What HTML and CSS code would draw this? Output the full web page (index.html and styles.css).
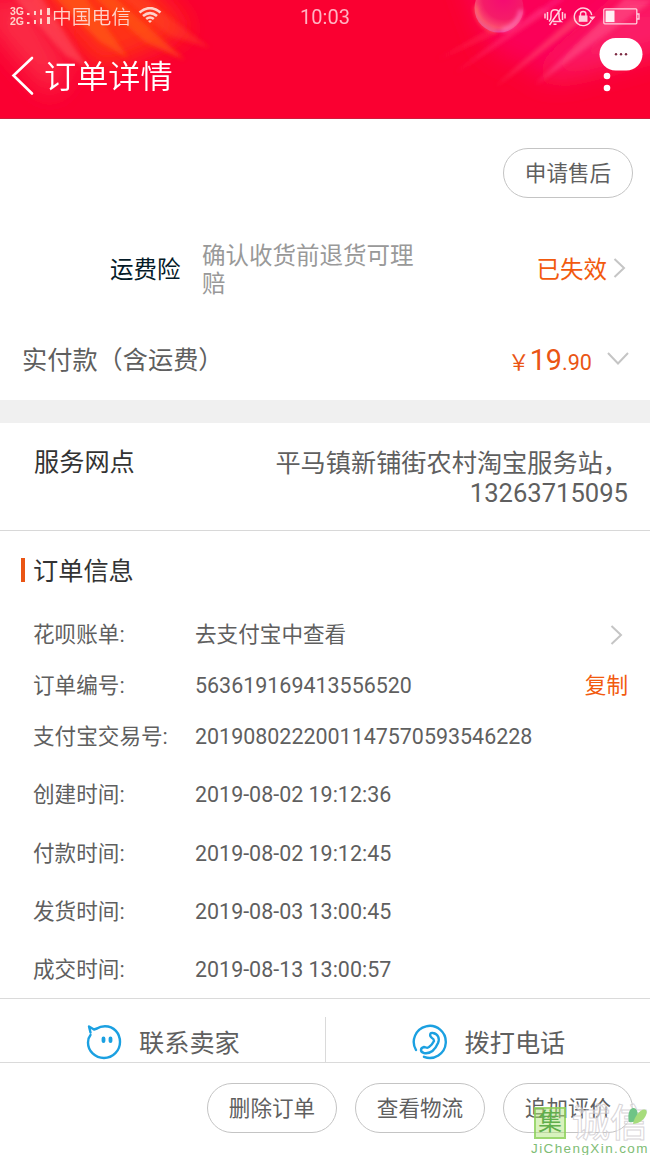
FILE: index.html
```html
<!DOCTYPE html>
<html lang="zh-CN">
<head>
<meta charset="utf-8">
<title>订单详情</title>
<link rel="stylesheet" href="styles.css">
</head>
<body>
<div class="screen">
  <header class="header">
    <svg class="header-art" viewBox="0 0 650 119" preserveAspectRatio="none" aria-hidden="true">
      <defs>
        <filter id="soft" x="-30%" y="-30%" width="160%" height="160%"><feGaussianBlur stdDeviation="13"/></filter>
        <filter id="streak" x="-30%" y="-30%" width="160%" height="160%"><feGaussianBlur stdDeviation="2.200"/></filter>
        <radialGradient id="ball" cx="0.6" cy="0.3" r="0.72">
          <stop offset="0" stop-color="#f50a72"/><stop offset="0.6" stop-color="#f51c68"/><stop offset="0.85" stop-color="#fb4a70"/><stop offset="1" stop-color="#e83ca4"/>
        </radialGradient>
      </defs>
      <rect width="650" height="119" fill="#fa0031"/>
      <g filter="url(#soft)">
        <path d="M20-30H135L190 30 150 50 100 70Z" fill="#ff3212"/>
        <path d="M-10 0 25 0 70 70 50 95-10 25Z" fill="#fb2d46"/>
        <path d="M460-30H690V45L560 80 490 50Z" fill="#fb0058"/>
        <path d="M535 80 620 5H680V45L590 70Z" fill="#fb1c68"/>
      </g>
      <g filter="url(#streak)">
        <path d="M12-5 40-5 88 68 66 56Z" fill="#ff5e62" opacity=".5"/>
        <path d="M52-5 84-5 128 58 100 42Z" fill="#ff6a17" opacity=".5"/>
        <path d="M92-5 112-5 185 60 145 42Z" fill="#ff5a18" opacity=".6"/>
        <path d="M120-5 140-5 210 48 170 36Z" fill="#ff4a2b" opacity=".4"/>
        <path d="M437 60 495 26 504 30Z" fill="#ff2858" opacity=".55"/>
        <path d="M455 73 540 8 552 10Z" fill="#ff3070" opacity=".6"/>
        <path d="M495 87 574 16 584 20Z" fill="#ff4c70" opacity=".6"/>
        <path d="M535 85 625-2 654 0Z" fill="#ff5c90" opacity=".5"/>
        <path d="M500 40 556-2 566-2Z" fill="#ff2c90" opacity=".5"/>
      </g>
      <circle cx="499" cy="8" r="24.500" fill="url(#ball)"/>
      <path d="M476 6a23 23 0 0 0 20 25" fill="none" stroke="#ff8a62" stroke-width="3" opacity=".65" filter="url(#streak)"/>
      <path d="M502 30a23 23 0 0 0 19-20" fill="none" stroke="#ff79c7" stroke-width="4" opacity=".8" filter="url(#streak)"/>
      <rect y="118" width="650" height="1" fill="#d01c3c"/>
    </svg>
    <div class="status">
      <div class="status-left">
        <span class="network"><span>3G</span><span>2G</span></span>
        <svg class="signal" width="24" height="18" viewBox="0 0 24 18" fill="#ffd2ca">
          <path d="M0 5h2.500v2H0zM0 14h2.500v2H0zM7 3h2v4H7zM7 12h2v4H7zM13 1.500h2V7h-2zM13 10.500h2V16h-2zM20 0h3v7h-3zM20 9h3v7h-3z"/>
        </svg>
        <span class="carrier">中国电信</span>
        <svg class="wifi" width="24" height="17" viewBox="0 0 24 17" fill="none" stroke="#ffd2ca" stroke-width="2.600">
          <path d="M1.500 5.500Q12-3.200 22.500 5.500M5 9Q12 3.200 19 9M8.200 12Q12 9 15.800 12"/><path d="M10 14Q12 12.600 14 14L12 16Z" fill="#ffd2ca" stroke="none"/>
        </svg>
      </div>
      <span class="clock">10:03</span>
      <div class="status-right">
        <svg width="22" height="18" viewBox="0 0 22 18" fill="none" stroke="#ffd0de" stroke-width="1.500">
          <path d="M1 5.500v5M3.500 4v8M18.500 4v8M21 5.500v5M5 13.500Q7 12 7 9V6Q7 1.800 11 1.800T15 6v3q0 3 2 4.500H9M9.500 16.200h3M17 .5 5.500 17"/>
        </svg>
        <svg width="23" height="20" viewBox="0 0 23 20" fill="none" stroke="#ffd0de" stroke-width="1.400">
          <path d="M18.300 13A8.800 8.800 0 1 1 18.700 8"/><path d="M16 9.500h6.500l-3.200 3.800Z" fill="#ffd0de" stroke="none"/>
          <rect x="5.800" y="8.500" width="8.700" height="6.300" fill="#ffd0de" stroke="none"/><path d="M7.500 9V6.800q0-2.300 2.700-2.300t2.700 2.300V9"/>
        </svg>
        <svg width="37" height="17" viewBox="0 0 37 17" fill="none" stroke="#ffd0de" stroke-width="1.300">
          <rect x=".8" y=".8" width="33" height="15" rx="1"/><rect x="2.500" y="2.500" width="9" height="11.600" fill="#fff0f4" stroke="none"/><path d="M34 6h2v5h-2"/>
        </svg>
      </div>
    </div>
    <div class="titlebar">
      <svg width="23" height="40" viewBox="0 0 23 40" fill="none" stroke="#fff" stroke-width="2.600" stroke-linecap="round"><path d="M21 2 2.500 19.500 21 37.500"/></svg>
      <h1>订单详情</h1>
    </div>
    <svg class="more" width="8" height="26" viewBox="0 0 8 26" fill="#fff"><circle cx="4" cy="9" r="3.300"/><circle cx="4" cy="21" r="3.300"/></svg>
    <svg class="bubble" width="44" height="34" viewBox="0 0 44 34"><rect x=".5" y="0" width="43" height="32.500" rx="16.200" fill="#fff"/><g fill="#7c2942"><circle cx="17" cy="16.300" r="1.200"/><circle cx="22" cy="16.300" r="1.200"/><circle cx="27" cy="16.300" r="1.200"/></g></svg>
  </header>

  <main>
    <div class="aftersale"><button class="pill">申请售后</button></div>
    <div class="insurance">
      <span class="insurance-name">运费险</span>
      <span class="insurance-desc">确认收货前退货可理赔</span>
      <span class="insurance-state">已失效</span>
      <svg class="chevron" width="13" height="20" viewBox="0 0 13 20"><path d="M1.500 1 11 10 1.500 19"/></svg>
    </div>
    <div class="payment">
      <span class="payment-name">实付款（含运费）</span>
      <span class="price"><span class="yen">￥</span><span class="yuan">19</span><span class="cents">.90</span></span>
      <svg class="chevron" width="22" height="14" viewBox="0 0 22 14"><path d="M1 1 11 11.500 21 1"/></svg>
    </div>
    <div class="divider"></div>
    <div class="station">
      <span class="station-name">服务网点</span>
      <div class="station-value"><span class="station-address">平马镇新铺街农村淘宝服务站，</span><span class="station-phone">13263715095</span></div>
    </div>
    <section class="info">
      <h2>订单信息</h2>
      <dl>
        <div class="row"><dt>花呗账单:</dt><dd class="zh">去支付宝中查看</dd><svg class="chevron" width="13" height="20" viewBox="0 0 13 20"><path d="M1.500 1 11 10 1.500 19"/></svg></div>
        <div class="row"><dt>订单编号:</dt><dd>563619169413556520</dd><span class="copy">复制</span></div>
        <div class="row"><dt>支付宝交易号:</dt><dd>2019080222001147570593546228</dd></div>
        <div class="row tall"><dt>创建时间:</dt><dd>2019-08-02 19:12:36</dd></div>
        <div class="row tall"><dt>付款时间:</dt><dd>2019-08-02 19:12:45</dd></div>
        <div class="row tall"><dt>发货时间:</dt><dd>2019-08-03 13:00:45</dd></div>
        <div class="row tall"><dt>成交时间:</dt><dd>2019-08-13 13:00:57</dd></div>
      </dl>
    </section>
    <div class="contact">
      <div class="contact-item">
        <svg width="36" height="36" viewBox="0 0 36 36" fill="none" stroke="#1ba0e1" stroke-width="2.400" stroke-linecap="round" stroke-linejoin="round">
          <path d="M4.500 8.500 3 2.500 8 5.500 11 4.500Q14 2.200 19 2.200C28 2.200 34 9.500 34 18S27 34 18 34 2 27 2 18.500Q2 14 4.500 11"/><path d="M17.500 14.500v2.500M24.500 14.500v2.500" stroke-width="3.800"/>
        </svg>
        <span>联系卖家</span>
      </div>
      <div class="contact-item">
        <svg width="36" height="36" viewBox="0 0 36 36" fill="none" stroke="#1ba0e1" stroke-width="2.400" stroke-linecap="round" stroke-linejoin="round">
          <path d="M4 26A16 16 0 1 1 12 32.800"/>
          <path d="M20 14C17 12 18 8 21 9C26 10 28 14 26 19C23 26 18 30 12 29C8 28 8 24 12 23C14 23 15 25 17 23C20 21 21 19 22 17Q22 15 20 14Z"/>
        </svg>
        <span>拨打电话</span>
      </div>
    </div>
  </main>

  <footer class="actions">
    <button class="pill">删除订单</button>
    <button class="pill">查看物流</button>
    <button class="pill">追加评价</button>
    <div class="watermark">
      <div class="mark-line">
        <span class="mark-box">集</span><span class="mark-text">诚</span><span class="mark-text">信</span>
        <svg class="leaf" width="20" height="20" viewBox="0 0 20 20"><path d="M1 15C-1 7 2 0 6 1c4 1 5 8 2 12q-2 3-7 2Z" fill="#6fc486"/><path d="M5 17C6 9 14 0 18 3c3 4-4 14-13 14Z" fill="#a6dc7c"/></svg>
      </div>
      <div class="mark-url">JiChengXin.com</div>
    </div>
  </footer>
</div>
</body>
</html>
```
FILE: styles.css
```css
* { box-sizing: border-box; }
body { margin: 0; background: #fff; }
.screen {
  width: 650px; height: 1155px; overflow: hidden; background: #fff;
  display: flex; flex-direction: column;
  font-family: Roboto, "Noto Sans CJK SC", sans-serif; font-weight: 400; color: #5f5f5f;
}
svg { display: block; flex: none; }
h1, h2, dl, dd { margin: 0; font-weight: inherit; }
span { white-space: nowrap; }

.header { position: relative; height: 119px; flex: none; color: #fff; }
.header-art { position: absolute; inset: 0; width: 100%; height: 100%; }
.status {
  position: relative; height: 33px; padding: 0 10px;
  display: grid; grid-template-columns: 1fr auto 1fr; align-items: center;
}
.status-left { display: flex; align-items: center; color: #ffd2ca; }
.network { display: flex; flex-direction: column; width: 16px; font: 700 10.500px/9.500px "Liberation Sans", sans-serif; }
.signal { margin-left: 1px; }
.carrier { margin-left: 1px; padding-top: 2px; font-size: 19.800px; font-weight: 350; line-height: 28px; }
.wifi { margin: -2px 0 0 7px; }
.clock { font-size: 20px; color: #ffb3c2; }
.status-right { display: flex; align-items: center; justify-content: flex-end; gap: 7px; }
.titlebar { position: relative; height: 86px; padding: 0 0 0 11px; display: flex; align-items: center; gap: 10px; }
.titlebar h1 { padding-top: 2px; font-size: 32.200px; line-height: 48px; font-weight: 350; }
.more { position: absolute; left: 603px; top: 67px; }
.bubble { position: absolute; left: 599px; top: 38px; }

.pill {
  width: 130px; height: 50px; padding: 2px 0 0; border: 1px solid #c4c4c4; border-radius: 25px;
  background: #fff; font-family: inherit; font-size: 21.600px; color: #5f5f5f; line-height: 46px;
}
.aftersale { height: 107px; padding: 29px 17px 0 0; display: flex; justify-content: flex-end; align-items: flex-start; }
.insurance { height: 84px; padding: 0 24px 0 110px; display: flex; align-items: center; font-size: 23.500px; }
.insurance-name { color: #051b28; width: 92px; }
.insurance-desc { width: 215px; padding-top: 3px; white-space: normal; color: #999; line-height: 28px; }
.insurance-state { margin-left: auto; margin-right: 6px; color: #f25a0e; }
.chevron { fill: none; stroke: #c5c5c5; stroke-width: 2; }
.payment { height: 90px; padding: 7px 21px 0 22px; display: flex; align-items: center; font-size: 25.200px; }
.payment-name { padding-bottom: 2px; }
.price { margin-left: auto; margin-right: 15px; color: #ea5514; display: flex; align-items: baseline; }
.yen { font-size: 21.600px; }
.yuan { font-size: 28.800px; padding-top: 2px; }
.cents { font-size: 21.600px; }
.divider { height: 23px; background: #f0f0f0; }
.station { height: 108px; padding: 25px 22px 0 34px; border-bottom: 1px solid #d8d8d8; display: flex; justify-content: space-between; font-size: 25.200px; line-height: 30px; }
.station-name { color: #333; }
.station-value { padding-top: 1px; display: flex; flex-direction: column; align-items: flex-end; }
.station-phone { font-size: 25.600px; line-height: 28px; }

.info { height: 467px; padding-top: 25px; }
.info h2 { height: 32px; margin-left: 21px; padding-left: 12px; font-size: 25.200px; line-height: 32px; color: #333;
  background: linear-gradient(#ea5514, #ea5514) 0 2px / 4px 24px no-repeat; }
.info dl { padding: 21.500px 22px 0 33px; }
.row { height: 51px; display: flex; align-items: center; font-size: 21.600px; line-height: 32px; }
.row.tall { height: 58.400px; padding-top: 7px; }
.row dt { width: 162px; white-space: nowrap; }
.row dd { font-size: 21.450px; }
.row dd.zh { font-size: 21.600px; }
.row .chevron { margin-left: auto; margin-right: 5px; }
.copy { margin-left: auto; color: #f25a0e; }

.contact { height: 65px; padding-top: 18px; border-top: 1px solid #dadada; border-bottom: 1px solid #dadada; display: flex; }
.contact-item { flex: 1; padding: 4px 0 0 86px; display: flex; align-items: center; gap: 17px; font-size: 25.200px; }
.contact-item span { padding-bottom: 1px; }
.contact-item + .contact-item { border-left: 1px solid #dadada; }

.actions { position: relative; height: 92px; padding: 20px 17px 0 0; display: flex; justify-content: flex-end; align-items: flex-start; gap: 18px; }
.watermark { position: absolute; left: 529px; top: 43px; width: 121px; }
.mark-line { display: flex; align-items: center; height: 34px; padding-left: 5px; }
.mark-box { width: 32px; height: 32px; border: 2px solid rgba(132,205,80,.7); background: rgba(178,230,125,.5); color: #5fae4a; font-size: 24px; line-height: 27px; text-align: center; margin-right: 6px; }
.mark-text { font-size: 38px; line-height: 36px; color: rgba(255,255,255,.5); -webkit-text-stroke: 1px rgba(200,195,200,.7); font-weight: 500; }
.leaf { position: absolute; left: 99px; top: 1px; }
.mark-url { font: 13.500px/18px "Liberation Sans", sans-serif; letter-spacing: 1.400px; color: #80bd75; padding-left: 2px; white-space: nowrap; }
```
